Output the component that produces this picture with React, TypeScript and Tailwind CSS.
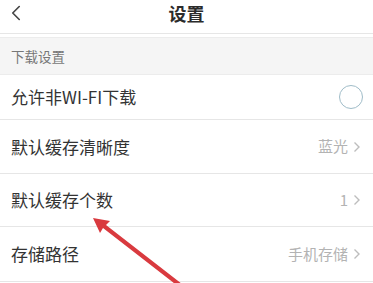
import { ChevronLeft } from "lucide-react";

const font = { fontFamily: '"Noto Sans CJK SC", "Noto Sans", sans-serif' };

function Row({
  label,
  value,
  height,
}: {
  label: string;
  value: string;
  height: string;
}) {
  return (
    <div className={`flex items-center justify-between border-b border-[#e6e6e6] pl-[11px] pr-[12px] ${height}`}>
      <span className="text-[17px] text-[#333]">{label}</span>
      <div className="flex items-center gap-[5px]">
        <span className="text-[15px] text-[#b3b3b3]">{value}</span>
        <svg width="8" height="12" viewBox="0 0 8 12" fill="none">
          <path d="M1.5 1.5 L6 6 L1.5 10.5" stroke="#bdbdbd" strokeWidth="1.4" />
        </svg>
      </div>
    </div>
  );
}

export default function App() {
  return (
    <div className="relative w-[373px] h-[283px] overflow-hidden bg-white" style={font}>
      {/* header */}
      <div className="relative flex h-[34px] items-center justify-center border-b border-[#e6e6e6] pb-[6px]">
        <ChevronLeft className="absolute left-[3px] top-[0px] h-[26px] w-[26px] text-[#444]" strokeWidth={1.5} />
        <span className="text-[18px] font-bold text-[#2b2b2b]">设置</span>
      </div>

      {/* section title */}
      <div className="mt-[3px] flex h-[38px] items-center border-y border-[#ececec] bg-[#f5f5f5] pl-[11px]">
        <span className="text-[13.5px] text-[#777]">下载设置</span>
      </div>

      {/* wifi toggle */}
      <div className="flex h-[45px] items-center justify-between border-b border-[#e6e6e6] pl-[11px] pr-[10px]">
        <span className="text-[17px] text-[#333]">允许非WI-FI下载</span>
        <div className="h-[24px] w-[24px] rounded-full border-[1.6px] border-[#9fbcc8]" />
      </div>

      <Row label="默认缓存清晰度" value="蓝光" height="h-[54px]" />
      <Row label="默认缓存个数" value="1" height="h-[53px]" />
      <Row label="存储路径" value="手机存储" height="h-[55px]" />

      {/* red annotation arrow */}
      <svg className="pointer-events-none absolute left-0 top-0" width="373" height="283" viewBox="0 0 373 283">
        <path d="M182 284 L179 287 L103 228 L100 233 L93 218 L110 221 L106 225 Z" fill="#d93a3f" />
      </svg>
    </div>
  );
}
